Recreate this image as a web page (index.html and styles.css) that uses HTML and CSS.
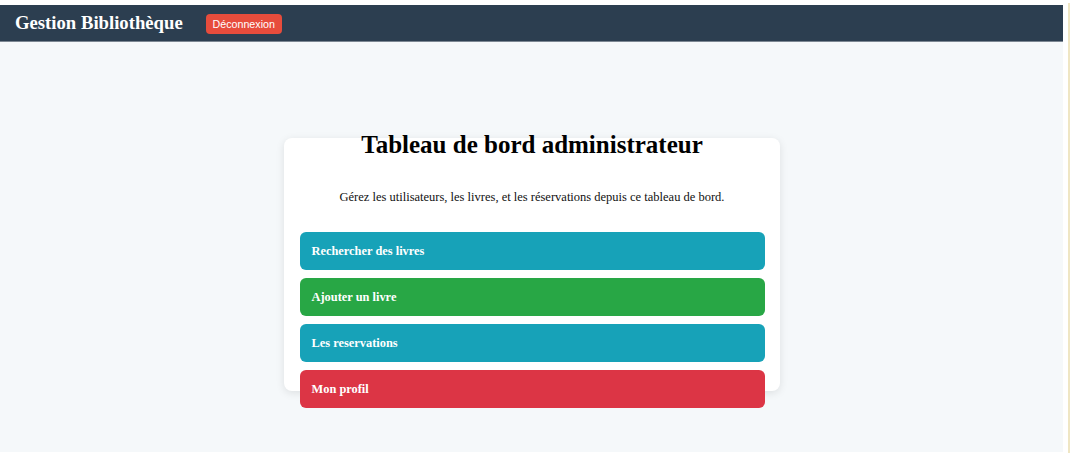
FILE: index.html
```html
<!DOCTYPE html>
<html lang="fr">
<head>
<meta charset="utf-8">
<title>Gestion Bibliothèque</title>
<link rel="stylesheet" href="styles.css">
</head>
<body>
<div class="frame">
  <div class="app">
    <nav class="navbar">
      <span class="brand">Gestion Bibliothèque</span>
      <button class="logout">Déconnexion</button>
    </nav>
    <main class="main">
      <section class="card">
        <h1 class="title">Tableau de bord administrateur</h1>
        <p class="intro">Gérez les utilisateurs, les livres, et les réservations depuis ce tableau de bord.</p>
        <div class="actions">
          <a class="action action-info">Rechercher des livres</a>
          <a class="action action-success">Ajouter un livre</a>
          <a class="action action-info">Les reservations</a>
          <a class="action action-danger">Mon profil</a>
        </div>
      </section>
    </main>
  </div>
  <div class="edge"></div>
</div>
</body>
</html>
```

FILE: styles.css
```css
* { box-sizing: border-box; }
html, body { margin: 0; padding: 0; }
body {
  background: #ffffff;
  font-family: "Liberation Serif", "Times New Roman", serif;
  width: 1073px;
  height: 455px;
  overflow: hidden;
}
.frame {
  display: flex;
  padding-top: 5px;
  height: 452px;
}
.app {
  width: 1063px;
  height: 447px;
  display: flex;
  flex-direction: column;
  background: #f5f8fa;
}
.edge {
  width: 2px;
  margin-left: 5px;
  margin-top: -2px;
  height: 450px;
  background: #efe6c4;
}
.navbar {
  height: 37px;
  background: #2c3e50;
  border-bottom: 1px solid #7c8792;
  display: flex;
  align-items: center;
  padding-left: 15px;
  flex-shrink: 0;
}
.brand {
  color: #ffffff;
  font-weight: bold;
  font-size: 18.7px;
  margin-right: 23px;
}
.logout {
  background: #e74c3c;
  color: #ffffff;
  border: none;
  border-radius: 4px;
  font-family: "Liberation Sans", Arial, sans-serif;
  font-size: 10.7px;
  height: 20px;
  width: 76px;
  padding: 0;
  margin-top: 1px;
}
.main {
  flex: 1;
  display: flex;
  justify-content: center;
  padding-top: 96px;
}
.card {
  width: 496px;
  height: 253px;
  background: #ffffff;
  border-radius: 8px;
  box-shadow: 0 2px 8px rgba(0, 0, 0, 0.1);
  padding: 0 15px 0 16px;
}
.title {
  margin: -8px 0 0;
  font-size: 25px;
  line-height: 30px;
  text-align: center;
  color: #000;
}
.intro {
  margin: 30px 0 0;
  font-size: 12.5px;
  line-height: 14px;
  text-align: center;
  color: #111;
}
.actions {
  margin-top: 28px;
  display: flex;
  flex-direction: column;
  gap: 8px;
}
.action {
  display: flex;
  align-items: center;
  height: 38px;
  padding-left: 12px;
  border-radius: 6px;
  color: #ffffff;
  font-weight: bold;
  font-size: 12.4px;
}
.action-info { background: #17a2b8; }
.action-success { background: #28a745; }
.action-danger { background: #dc3545; }
```
